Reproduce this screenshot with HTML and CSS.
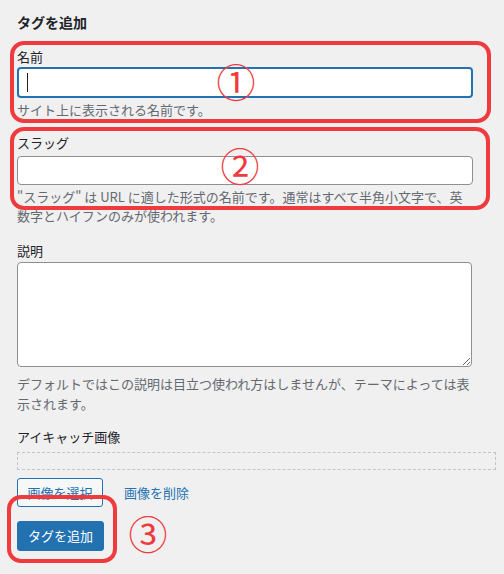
FILE: index.html
```html
<!DOCTYPE html>
<html lang="ja">
<head>
<meta charset="utf-8">
<title>タグを追加</title>
<link rel="stylesheet" href="styles.css">
</head>
<body>
<div class="page">
  <h2 class="title">タグを追加</h2>

  <div class="field field-name">
    <label class="label">名前</label>
    <div class="input-wrap">
      <input class="input input-focus" type="text">
      <span class="caret"></span>
    </div>
    <p class="help">サイト上に表示される名前です。</p>
  </div>

  <div class="field field-slug">
    <label class="label">スラッグ</label>
    <input class="input input-slug" type="text">
    <p class="help">"スラッグ" は URL に適した形式の名前です。通常はすべて半角小文字で、英数字とハイフンのみが使われます。</p>
  </div>

  <div class="field field-desc">
    <label class="label">説明</label>
    <textarea class="textarea"></textarea>
    <p class="help">デフォルトではこの説明は目立つ使われ方はしませんが、テーマによっては表示されます。</p>
  </div>

  <div class="field field-image">
    <label class="label">アイキャッチ画像</label>
    <div class="image-box"></div>
    <div class="image-actions">
      <button class="btn btn-secondary" type="button">画像を選択</button>
      <a class="link" href="#">画像を削除</a>
    </div>
  </div>

  <div class="submit">
    <button class="btn btn-primary" type="button">タグを追加</button>
  </div>

  <div class="mark mark-1"></div>
  <div class="mark mark-2"></div>
  <div class="mark mark-3"></div>
  <span class="num num-1">①</span>
  <span class="num num-2">②</span>
  <span class="num num-3">③</span>
</div>
</body>
</html>
```

FILE: styles.css
```css
* { box-sizing: border-box; }

html, body {
  margin: 0;
  padding: 0;
  background: #f0f0f1;
}

body {
  font-family: "Noto Sans CJK JP", "Noto Sans", sans-serif;
  font-size: 13px;
  color: #1d2327;
  width: 504px;
  height: 574px;
  overflow: hidden;
}

.page {
  position: relative;
  padding: 12px 8px 0 17px;
  width: 504px;
  height: 574px;
}

.title {
  margin: 0;
  font-size: 14px;
  font-weight: 700;
  line-height: 20px;
}

.field { display: flex; flex-direction: column; align-items: flex-start; }

.label {
  display: block;
  line-height: 20px;
}

.field-name { margin-top: 15px; }
.field-slug { margin-top: 13px; }
.field-desc { margin-top: 15px; }
.field-image { margin-top: 13px; }

.input-wrap { position: relative; }

.input {
  display: block;
  width: 456px;
  height: 29px;
  margin: 3px 0 0;
  padding: 0 8px;
  border: 1px solid #8c8f94;
  border-radius: 4px;
  background: #fff;
  font: inherit;
  outline: none;
}

.input-focus {
  margin-top: 0;
  height: 31px;
  border: 2px solid #2271b1;
}

.caret {
  position: absolute;
  left: 10px;
  top: 6px;
  width: 1px;
  height: 19px;
  background: #1d2327;
}

.help {
  margin: 2px 0 0;
  color: #646970;
  line-height: 19.5px;
  width: 456px;
}

.field-desc .help { line-height: 20px; margin-top: 7px; }

.textarea {
  display: block;
  width: 455px;
  height: 105px;
  margin: 1px 0 0;
  border: 1px solid #8c8f94;
  border-radius: 4px;
  background: #fff;
  font: inherit;
  resize: vertical;
  outline: none;
}

.image-box {
  width: 479px;
  height: 18px;
  margin-top: 5px;
  border: 1px dashed #c3c4c7;
}

.image-actions {
  display: flex;
  align-items: center;
  gap: 21px;
  margin-top: 8px;
}

.btn {
  font: inherit;
  font-size: 13px;
  height: 29px;
  padding: 0;
  border-radius: 3px;
  line-height: 27px;
  white-space: nowrap;
  text-align: center;
  cursor: pointer;
}

.btn-secondary {
  width: 86px;
  background: #f6f7f7;
  border: 1px solid #2271b1;
  color: #2271b1;
}

.link {
  color: #2271b1;
  text-decoration: none;
}

.submit { margin-top: 14px; }

.btn-primary {
  width: 87px;
  height: 30px;
  background: #2271b1;
  border: 1px solid #2271b1;
  color: #fff;
}

.mark {
  position: absolute;
  border: 4px solid #ef3b3e;
  border-radius: 14px;
}

.mark-1 { left: 10px; top: 41px; width: 481px; height: 82px; }
.mark-2 { left: 10px; top: 127px; width: 480px; height: 83px; }
.mark-3 { left: 7px; top: 495px; width: 110px; height: 68px; }

.num {
  position: absolute;
  color: #ef3b3e;
  font-family: "Noto Sans CJK JP", sans-serif;
  font-size: 39px;
  line-height: 1;
  transform: translate(-50%, -50%);
}

.num-1 { left: 236px; top: 80px; }
.num-2 { left: 240px; top: 164px; }
.num-3 { left: 148px; top: 532px; }
```
